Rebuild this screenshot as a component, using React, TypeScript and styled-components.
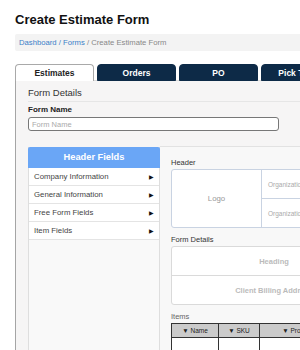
import React from "react";
import styled, { createGlobalStyle } from "styled-components";

const GlobalStyle = createGlobalStyle`
  html, body { margin: 0; padding: 0; background: #fff; }
  body { font-family: "Liberation Sans", Arial, Helvetica, sans-serif; overflow: hidden; }
  #root { width: 300px; height: 350px; overflow: hidden; }
`;

const Page = styled.div`
  width: 520px;
  padding: 11px 0 0 15px;
  box-sizing: border-box;
`;

const Title = styled.h1`
  margin: 0;
  font-size: 13px;
  line-height: 18px;
  font-weight: bold;
  color: #111;
`;

const Breadcrumb = styled.div`
  margin-top: 5px;
  height: 17px;
  line-height: 17px;
  background: #f3f3f3;
  padding-left: 4px;
  font-size: 7.7px;
  color: #888;
  border-radius: 2px;
`;

const Crumb = styled.span`
  color: #3b7fc8;
`;

const Tabs = styled.div`
  margin-top: 13px;
  display: flex;
  gap: 3px;
  height: 17px;
`;

const Tab = styled.div<{ $active?: boolean }>`
  width: 79px;
  box-sizing: border-box;
  height: 17px;
  line-height: 16px;
  text-align: center;
  font-size: 8.5px;
  font-weight: bold;
  border-radius: 4px 4px 0 0;
  color: ${(p) => (p.$active ? "#222" : "#fff")};
  background: ${(p) => (p.$active ? "#fff" : "#0d2a47")};
  border: 1px solid ${(p) => (p.$active ? "#a9a9a9" : "#0d2a47")};
  border-bottom: ${(p) => (p.$active ? "none" : "1px solid #0d2a47")};
  position: relative;
  z-index: 1;
`;

const Panel = styled.div`
  border-left: 1px solid #a5a5a5;
  border-top: 1px solid #dcdcdc;
  background: #f6f5f5;
  padding: 5px 0 0 12px;
  height: 300px;
  margin-top: -1px;
`;

const SectionTitle = styled.div`
  font-size: 9.5px;
  line-height: 13px;
  color: #333;
  padding-bottom: 2px;
  border-bottom: 1px solid #e6e6e6;
`;

const Label = styled.div`
  font-size: 8px;
  font-weight: bold;
  color: #222;
  margin-top: 2px;
  line-height: 11px;
`;

const Input = styled.input`
  display: block;
  box-sizing: border-box;
  margin-top: 2px;
  width: 251px;
  height: 14px;
  border: 1px solid #777;
  border-radius: 3px;
  padding: 0 3px;
  font-family: inherit;
  font-size: 7.5px;
  background: #fff;
  &::placeholder { color: #aaa; }
`;

const Body = styled.div`
  display: flex;
  margin-top: 15px;
`;

const Sidebar = styled.div`
  width: 132px;
  flex: none;
  margin-top: 1px;
  background: #f9f9f9;
  border-left: 1px solid #dedede;
  border-right: 1px solid #dedede;
  box-sizing: border-box;
  height: 220px;
`;

const SideHeader = styled.div`
  height: 21px;
  line-height: 21px;
  background: #6aa6f6;
  color: #fff;
  font-weight: bold;
  font-size: 9.3px;
  text-align: center;
  margin: 0 -1px;
  border-radius: 2px 2px 0 0;
`;

const SideItem = styled.div`
  height: 18px;
  box-sizing: border-box;
  border-bottom: 1px solid #e4e4e4;
  background: #fff;
  display: flex;
  align-items: center;
  justify-content: space-between;
  padding: 0 5px 0 5px;
  font-size: 7.8px;
  color: #444;
`;

const Arrow = styled.span`
  font-size: 6px;
  color: #111;
`;

const Canvas = styled.div`
  flex: 1;
  border-top: 1px solid #e2e2e2;
  background: #f8f8f8;
  padding: 11px 0 0 11px;
  height: 220px;
`;

const CanvasLabel = styled.div<{ $muted?: boolean }>`
  font-size: 7.5px;
  line-height: 9px;
  color: ${(p) => (p.$muted ? "#666" : "#333")};
  margin-bottom: 2px;
`;

const HeaderBox = styled.div`
  width: 240px;
  height: 59px;
  border: 1px solid #c9d3e2;
  border-radius: 3px;
  background: #fff;
  display: flex;
  box-sizing: border-box;
  margin-bottom: 7px;
`;

const LogoCell = styled.div`
  width: 89px;
  border-right: 1px solid #c9d3e2;
  display: flex;
  align-items: center;
  justify-content: center;
  font-size: 7.8px;
  color: #999;
`;

const OrgCol = styled.div`
  flex: 1;
  display: flex;
  flex-direction: column;
`;

const OrgCell = styled.div`
  flex: 1;
  display: flex;
  align-items: center;
  padding-left: 6px;
  font-size: 6.5px;
  color: #aaa;
  & + & { border-top: 1px solid #c9d3e2; }
`;

const DetailsBox = styled.div`
  width: 206px;
  height: 59px;
  border: 1px solid #dadada;
  border-radius: 3px;
  background: #fff;
  display: flex;
  flex-direction: column;
  box-sizing: border-box;
  margin-bottom: 7px;
`;

const DetailsRow = styled.div`
  flex: 1;
  display: flex;
  align-items: center;
  justify-content: center;
  font-size: 7.5px;
  font-weight: bold;
  color: #bbb;
  white-space: nowrap;
  & + & { border-top: 1px solid #dadada; }
`;

const Table = styled.div`
  display: grid;
  grid-template-columns: 47px 41px 76px 60px;
  width: 226px;
  border-left: 1px solid #333;
  border-top: 1px solid #333;
`;

const Th = styled.div`
  height: 13px;
  background: #cbcbcb;
  border-right: 1px solid #333;
  border-bottom: 1px solid #333;
  font-size: 6.5px;
  line-height: 13px;
  text-align: center;
  color: #222;
  white-space: nowrap;
`;

const Td = styled.div`
  height: 30px;
  background: #fff;
  border-right: 1px solid #333;
`;

const sideItems = ["Company Information", "General Information", "Free Form Fields", "Item Fields"];
const columns = ["Name", "SKU", "Product", "Price"];

export default function App() {
  return (
    <>
      <GlobalStyle />
      <Page>
        <Title>Create Estimate Form</Title>
        <Breadcrumb>
          <Crumb>Dashboard</Crumb> <Crumb>/</Crumb> <Crumb>Forms</Crumb> / Create Estimate Form
        </Breadcrumb>
        <Tabs>
          <Tab $active>Estimates</Tab>
          <Tab>Orders</Tab>
          <Tab>PO</Tab>
          <Tab>Pick Ticket</Tab>
        </Tabs>
        <Panel>
          <SectionTitle>Form Details</SectionTitle>
          <Label>Form Name</Label>
          <Input placeholder="Form Name" />
          <Body>
            <Sidebar>
              <SideHeader>Header Fields</SideHeader>
              {sideItems.map((s) => (
                <SideItem key={s}>
                  {s}
                  <Arrow>▶</Arrow>
                </SideItem>
              ))}
            </Sidebar>
            <Canvas>
              <CanvasLabel>Header</CanvasLabel>
              <HeaderBox>
                <LogoCell>Logo</LogoCell>
                <OrgCol>
                  <OrgCell>Organization Name</OrgCell>
                  <OrgCell>Organization Address</OrgCell>
                </OrgCol>
              </HeaderBox>
              <CanvasLabel>Form Details</CanvasLabel>
              <DetailsBox>
                <DetailsRow>Heading</DetailsRow>
                <DetailsRow>Client Billing Address</DetailsRow>
              </DetailsBox>
              <CanvasLabel $muted>Items</CanvasLabel>
              <Table>
                {columns.map((c) => (
                  <Th key={c}>▼ {c}</Th>
                ))}
                {columns.map((c) => (
                  <Td key={c} />
                ))}
              </Table>
            </Canvas>
          </Body>
        </Panel>
      </Page>
    </>
  );
}
